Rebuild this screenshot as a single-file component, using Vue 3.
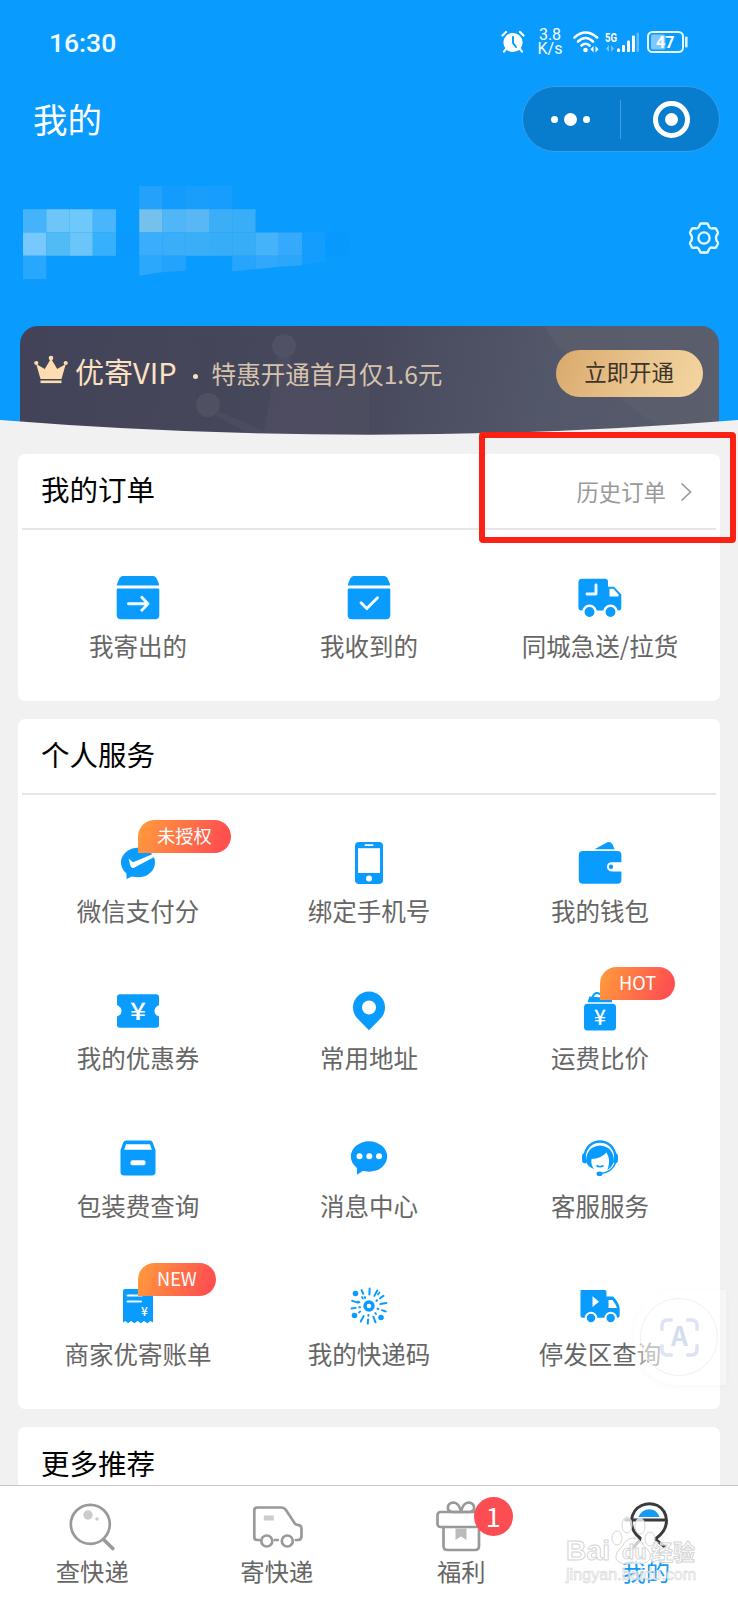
<script setup>
const mosaic = [
  [5, 0, '#24a2fb'], [6, 0, '#149cfd'], [7, 0, '#1a9efc'], [8, 0, '#169dfd'],
  [0, 1, '#45b3fb'], [1, 1, '#6dc5f8'], [2, 1, '#6fc8fa'], [3, 1, '#48b5fc'],
  [5, 1, '#74c1ec'], [6, 1, '#50b6f6'], [7, 1, '#59b7f6'], [8, 1, '#3caef7'], [9, 1, '#39adf7'],
  [0, 2, '#76c8ff'], [1, 2, '#50bbf5'], [2, 2, '#6bc5f9'], [3, 2, '#37b0fc'], [4, 2, '#0a99fd'],
  [5, 2, '#3aaefb'], [6, 2, '#3aaef9'], [7, 2, '#3aaef7'], [8, 2, '#38adf7'], [9, 2, '#38adf7'], [10, 2, '#46b2f9'], [11, 2, '#35a9fc'], [12, 2, '#139dfd'], [13, 2, '#0899ff'],
  [0, 3, '#28a7ff'],
]
const orders = [
  { icon: 'sent', label: '我寄出的' },
  { icon: 'received', label: '我收到的' },
  { icon: 'express', label: '同城急送/拉货' },
]
const services = [
  { icon: 'pay', label: '微信支付分', tag: '未授权' },
  { icon: 'phone', label: '绑定手机号' },
  { icon: 'wallet', label: '我的钱包' },
  { icon: 'coupon', label: '我的优惠券' },
  { icon: 'pin', label: '常用地址' },
  { icon: 'compare', label: '运费比价', tag: 'HOT' },
  { icon: 'pack', label: '包装费查询' },
  { icon: 'message', label: '消息中心' },
  { icon: 'support', label: '客服服务' },
  { icon: 'bill', label: '商家优寄账单', tag: 'NEW' },
  { icon: 'code', label: '我的快递码' },
  { icon: 'truck', label: '停发区查询' },
]
const groups = [
  { key: 'orders', title: '我的订单', more: '历史订单', items: orders },
  { key: 'services', title: '个人服务', items: services },
]
const rays = [272, 245, 298, 325, 350, 18, 68, 94, 118, 172, 197]
const tabs = [
  { icon: 'search', label: '查快递' },
  { icon: 'van', label: '寄快递' },
  { icon: 'gift', label: '福利', badge: 1 },
  { icon: 'me', label: '我的', active: true },
]
</script>

<template>
  <div class="app">
    <header class="hero">
      <div class="status">
        <span class="clock">16:30</span>
        <div class="status-icons">
          <svg class="alarm" viewBox="0 0 24 24">
            <circle cx="12" cy="12.5" r="9.6" fill="#fff" />
            <path d="M1.5 5.5L5 2M22.5 5.5L19 2M5 19l-2 2.6M19 19l2 2.6" stroke="#fff" stroke-width="2.2" stroke-linecap="round" />
            <path d="M12 7v6l3 4" fill="none" stroke="#0a9bff" stroke-width="2" stroke-linecap="round" />
          </svg>
          <span class="speed"><span>3.8</span><span>K/s</span></span>
          <svg class="wifi" viewBox="0 0 26 24">
            <g fill="none" stroke="#fff" stroke-width="2.6" stroke-linecap="round">
              <path d="M1.5 7.5Q12.500-2.500 24 7.500" /><path d="M5 11.500Q12.500 4.500 20 11.500" /><path d="M8.500 15.500Q12.500 12 16.500 15.500" />
            </g>
            <circle cx="12.500" cy="20" r="2.300" fill="#fff" />
            <path d="M20.500 16v6.400L17.500 19.200zM22.500 16v6.400l3-3.200z" fill="#fff" />
          </svg>
          <svg class="signal" viewBox="0 0 36 24">
            <text x="0" y="11.500" class="five-g" textLength="12" lengthAdjust="spacingAndGlyphs">5G</text>
            <path d="M4 15v7l-3-3.500zM6 15v7l3-3.500z" fill="#6fc4ff" />
            <g fill="#fff"><rect x="12" y="18.500" width="3" height="3.500" rx="1" /><rect x="17" y="15" width="3" height="7" rx="1" /><rect x="22" y="10.500" width="3" height="11.500" rx="1" /><rect x="27" y="5.500" width="3" height="16.500" rx="1" /></g>
            <rect x="31.500" y="2.500" width="2.500" height="19.500" rx="1" fill="#5cbcff" />
          </svg>
          <svg class="battery" viewBox="0 0 42 24">
            <rect x="1" y="2" width="35" height="20" rx="4.500" fill="none" stroke="#e9fbff" stroke-width="2" />
            <rect x="4" y="4.500" width="14.500" height="15" rx="2" fill="#7fc8ff" />
            <rect x="38" y="6.500" width="2.600" height="11" rx="1" fill="#d9f4ff" />
            <text x="18.300" y="17.800" text-anchor="middle" class="charge">47</text>
          </svg>
        </div>
      </div>

      <div class="title-row">
        <h1>我的</h1>
        <div class="capsule">
          <span class="dots"><i></i><i class="big"></i><i></i></span>
          <span class="bar"></span>
          <span class="target"><i></i></span>
        </div>
      </div>

      <div class="profile">
        <svg class="mosaic" viewBox="0 0 330 95">
          <rect v-for="(c, i) in mosaic" :key="i" :x="c[0] * 23.25" :y="c[1] * 23.25" width="23.300" height="23.300" :fill="c[2]" />
          <path d="M116.250 69.750h23.250v16.500l-23.250 3.500z" fill="#2ba7fb" />
          <path d="M139.500 69.750h23.250v15l-23.250 1.500z" fill="#24a3fc" />
          <path d="M209.250 69.750h23.250v13.500l-23.250 2z" fill="#27a4fb" />
          <path d="M232.500 69.750h23.250v11l-23.250 2.500z" fill="#30a8fb" />
          <path d="M255.750 69.750H279v9.500l-23.250 1.500z" fill="#2ba6fb" />
          <path d="M279 69.750h23.250v6l-23.250 3z" fill="#139dfd" />
        </svg>
        <svg class="gear" viewBox="-17 -17 34 34">
          <path d="M-3.500-14.500H3.500L5.500-10.500Q7.200-9 9.500-9.800L12-9.500 14-5.500Q14-4 12.500-2.500 11.500 0 12.500 2.500 14 4 14 5.500L12 9.500 9.500 9.800Q7.200 9 5.500 10.500L3.500 14.500H-3.500L-5.500 10.500Q-7.200 9-9.500 9.800L-12 9.500-14 5.500Q-14 4-12.500 2.500-11.500 0-12.500-2.500-14-4-14-5.500L-12-9.500-9.500-9.800Q-7.200-9-5.500-10.500Z" fill="none" stroke="#e6fbff" stroke-width="2.300" stroke-linejoin="round" />
          <circle r="5.600" fill="none" stroke="#e6fbff" stroke-width="2.300" />
        </svg>
      </div>

      <div class="vip">
        <svg class="vip-art" viewBox="0 0 699 115">
          <g fill="#555467" opacity=".75"><circle cx="264" cy="20" r="12" /><circle cx="188" cy="79" r="12" /><path d="M258 28h11l5 30q30 14 55-2l20-12v71H240l-20-12-24-13 2-5 46 20 6-33z" opacity=".55" /></g>
          <path d="M525 0q10 24 34 34l58 52q28 18 60 29h22V0z" fill="#62646f" opacity=".4" />
        </svg>
        <svg class="crown" viewBox="0 0 34 30">
          <path d="M6.500 24L2.200 9 10.800 14 17 3.500 23.200 14 31.800 9 27.500 24z" fill="#fcdcb0" />
          <g fill="#fcdcb0"><circle cx="17" cy="3" r="2.300" /><circle cx="2.300" cy="8" r="2.100" /><circle cx="31.700" cy="8" r="2.100" /><rect x="6.500" y="25.500" width="21" height="2.600" /></g>
        </svg>
        <span class="vip-name">优寄VIP</span>
        <span class="vip-dot"></span>
        <span class="vip-text">特惠开通首月仅1.6元</span>
        <button class="vip-btn">立即开通</button>
      </div>
      <svg class="curve" viewBox="0 0 738 17"><path d="M0 1Q369 30.500 738 1V17H0z" fill="#f1f1f1" /></svg>
    </header>

    <main class="content">
      <section v-for="g in groups" :key="g.key" class="card" :class="g.key">
        <div class="card-head">
          <h2>{{ g.title }}</h2>
          <div v-if="g.more" class="more">
            <span>{{ g.more }}</span>
            <svg viewBox="0 0 12 20"><path d="M1.500 1.500L10.500 10l-9 8.500" fill="none" stroke="#999" stroke-width="1.700" /></svg>
            <div class="highlight"></div>
          </div>
        </div>
        <div class="grid">
          <div v-for="it in g.items" :key="it.icon" class="item">
            <div class="icon-wrap">
              <svg class="icon" viewBox="-24 -24 48 48">
                <g v-if="it.icon === 'sent' || it.icon === 'received'">
                  <path d="M-21.300-12.500Q-19.500-19-17.500-21 -16.500-22-15-22H15Q16.500-22 17.500-21 19.500-19 21.300-12.500z" />
                  <path d="M-20.300-9.500H20.300Q21.300-9.500 21.300-8.500V17Q21.300 21.200 17 21.200H-17Q-21.300 21.200-21.300 17V-8.500Q-21.300-9.500-20.300-9.500z" />
                  <path v-if="it.icon === 'sent'" d="M-9.500 5.700H9.500M3.800-.8L10 5.700 3.800 12.200" class="line" />
                  <path v-else d="M-8 4.700L-2.200 10.600 8.500-.2" class="line" />
                </g>
                <g v-else-if="it.icon === 'express'">
                  <path d="M-18-19.300H5Q8-19.300 8-16V-11.200H14L21.300-3.500V9.500Q21.300 12.500 18.500 12.500H-18.500Q-21.600 12.500-21.600 9V-15.500Q-21.600-19.300-18-19.300z" />
                  <path d="M9.500-9.300H13.500L18.500-3.500V-1.500H9.500z" fill="#fff" />
                  <path d="M-4-13V-4H-13" class="line" stroke-linecap="butt" />
                  <g stroke="#fff" stroke-width="2.500"><circle cx="-10.500" cy="14" r="6.200" /><circle cx="10.500" cy="14" r="6.200" /></g>
                </g>
                <g v-else-if="it.icon === 'pay'">
                  <ellipse cy="-.5" rx="17" ry="14.800" /><path d="M-11.500 9V16L-3 12z" />
                  <path d="M-9.500-4.500L-5-.8 16.200-9.500V-6L-4.500 5Q-6.500 5.500-7.500 3z" fill="#fff" />
                </g>
                <g v-else-if="it.icon === 'phone'">
                  <rect x="-14" y="-21" width="28" height="42" rx="4" /><rect x="-11" y="-14.800" width="22" height="24.800" fill="#fff" />
                  <rect x="-4.500" y="-18.800" width="9" height="1.900" rx="1" fill="#fff" /><circle cy="15.500" r="3" fill="#fff" />
                </g>
                <g v-else-if="it.icon === 'wallet'">
                  <path d="M-5.500-13.800L7.500-20.800Q11-21.500 12.500-18.500L14.600-13.800z" /><rect x="-21.200" y="-12" width="42.600" height="32.800" rx="4" />
                  <path d="M22-.8H11.500a4.600 4.600 0 000 9.200H22z" fill="#fff" /><circle cx="11" cy="3.700" r="2.200" />
                </g>
                <g v-else-if="it.icon === 'coupon'">
                  <path d="M-18-16.800H18Q21-16.800 21-14V-6Q16.500-4 16.500 0 16.500 4 21 5.500V14Q21 16.800 18 16.800H-18Q-21 16.800-21 14V5.500Q-16.500 4-16.500 0-16.500-4-21-6V-14Q-21-16.800-18-16.800z" />
                  <text y="9" class="yen" textLength="16" lengthAdjust="spacingAndGlyphs">¥</text>
                </g>
                <g v-else-if="it.icon === 'pin'">
                  <path d="M0 19.300L-11.800 7.300A16 16 0 1111.800 7.300z" /><circle cy="-3.500" r="7" fill="#fff" />
                </g>
                <g v-else-if="it.icon === 'compare'">
                  <path d="M-12.500-8.800L-10.500-14.500 2-13.500 12-14.500V-8.800z" /><path d="M-7.500-14Q-5-20 0-17 3-19 6-14" fill="none" stroke="#0a9bff" stroke-width="2" />
                  <rect x="-16" y="-7.200" width="32" height="26.600" rx="3.500" /><text y="14.300" class="yen small">¥</text>
                </g>
                <g v-else-if="it.icon === 'pack'">
                  <path d="M-12-17.600H12Q14-17.600 14.700-15.500L17.500-8V14Q17.500 17.400 14 17.400H-14Q-17.500 17.400-17.500 14V-8L-14.700-15.500Q-14-17.600-12-17.600z" />
                  <path d="M-12-13.800H12L13.800-8.200H-13.800z" fill="#fff" /><rect x="-7.500" y="2.300" width="15" height="5" rx="2" fill="#fff" />
                </g>
                <g v-else-if="it.icon === 'message'">
                  <ellipse cy="-1.500" rx="18.200" ry="15.200" /><path d="M-12 8V16.800L-4 11.500z" />
                  <g fill="#fff"><circle cx="-9.500" cy="-1.700" r="3" /><circle cx=".3" cy="-1.700" r="3" /><circle cx="10" cy="-1.700" r="3" /></g>
                </g>
                <g v-else-if="it.icon === 'support'">
                  <path d="M-15-4A15.200 15 0 0115-4" fill="none" stroke="#0a9bff" stroke-width="2.400" />
                  <path d="M-18-2Q-18-5-14-5.500V5.500Q-18 5.500-18 2zM18-2Q18-5 14-5.500V5.500Q18 5.500 18 2z" />
                  <path d="M-14 4Q-14-11.500 0-12.500 14-11.500 14 4 12 9 7.500 12 10 4 8.500-1L6.500-5.500Q1 .5-8.500 1-9.500 6-6 11-12 9-14 4z" />
                  <path d="M-3.500 7.500Q0 10 3.500 7.500M15.500 5Q12 14 1 15.500" fill="none" stroke="#0a9bff" stroke-width="1.600" />
                  <ellipse cx="-.5" cy="15.800" rx="3" ry="2.300" />
                </g>
                <g v-else-if="it.icon === 'bill'">
                  <path d="M-13-17H13Q15-17 15-15V16.500L12.500 15 9.500 17.200 6 15 3 17.200-.5 15-3.500 17.200-7 15-10 17.200-12.500 15-15 16.500V-15Q-15-17-13-17z" />
                  <path d="M-10.500-10.500H4M-10.500-4.500H3" class="line thin" /><text x="6.500" y="9.800" class="yen tiny">¥</text>
                </g>
                <g v-else-if="it.icon === 'code'">
                  <circle r="4" fill="none" stroke="#0a9bff" stroke-width="3.400" />
                  <path v-for="(a, i) in rays" :key="a" :transform="`rotate(${a})`" :d="i % 2 ? 'M9 0H9.800M13.500 0H17.600' : 'M11.500 0H17.600'" stroke="#0a9bff" stroke-width="2" stroke-linecap="round" />
                  <circle cx="-13.500" cy="-12.500" r="2.800" /><circle cx="-14.500" cy="9.500" r="2.800" /><circle cx="12" cy="11.500" r="2.800" />
                  <path d="M-11-4.500L-9.500-3.800M-10 6.500L-8.800 5.500M7 8L6.200 7M-7-9L-6-7.500M10.500-13.500L9-11.500" stroke="#0a9bff" stroke-width="1.800" stroke-linecap="round" />
                </g>
                <g v-else>
                  <path d="M-18.500-16H4.500Q6.500-16 6.500-14V-9.500H13Q19.500-3 19.700 3V9Q19.700 11.700 17.500 11.700H-17.500Q-19.500 11.700-19.500 9.700V-15Q-19.500-16-18.500-16z" />
                  <path d="M8.500-6H12.500Q15.500-2.500 17 2H8.500zM-7.500-9.700L-1-4.300-7.500 1z" fill="#fff" />
                  <g stroke="#fff" stroke-width="2"><circle cx="-9" cy="12" r="5.200" /><circle cx="10.700" cy="12" r="5.200" /></g>
                </g>
              </svg>
              <span v-if="it.tag" class="tag">{{ it.tag }}</span>
            </div>
            <span class="label">{{ it.label }}</span>
          </div>
        </div>
      </section>
      <section class="card last"><div class="card-head"><h2>更多推荐</h2></div></section>
    </main>

    <div class="float-pane">
      <div class="float-btn">
        <svg viewBox="0 0 40 40">
          <path d="M2 13V8Q2 2 8 2H13M27 2H32Q38 2 38 8V13M38 27V32Q38 38 32 38H27M13 38H8Q2 38 2 32V27" fill="none" stroke="#dce4f3" stroke-width="3.500" />
          <text x="20" y="29" text-anchor="middle" class="scan">A</text>
        </svg>
      </div>
    </div>

    <nav class="tabbar">
      <div v-for="t in tabs" :key="t.icon" class="tab" :class="{ active: t.active }">
        <div class="tab-icon">
          <svg viewBox="-30 -30 60 60" fill="none" stroke="#999" stroke-width="2.700" stroke-linecap="round">
            <g v-if="t.icon === 'search'">
              <circle cx="-1.700" cy="-.7" r="19.500" /><path d="M12 15L20.800 23.500" stroke-width="3.600" />
              <g stroke="none" fill="#ccc"><circle cx="-4" cy="-10" r="4.700" /><circle cx="5" cy="-6" r="1.700" /></g>
            </g>
            <g v-else-if="t.icon === 'van'" transform="translate(-1.200 0)">
              <path d="M-16 15H-18.500Q-21.500 15-21.500 12V-14.500Q-21.500-17.500-18.500-17.500H5.500Q8.500-17.500 10.500-14.500L19-1.500Q20.500 0 22-.2 25.700 0 25.700 3.500V11Q25.700 15 22 15H20M-1 15H2" />
              <circle cx="-9" cy="16" r="5.500" /><circle cx="11.500" cy="16" r="5.500" /><path d="M-12-9.500h10v5h-10z" fill="#ccc" stroke="none" />
            </g>
            <g v-else-if="t.icon === 'gift'">
              <rect x="-23.500" y="-13" width="42" height="15" rx="3" /><path d="M-17.500 2V21Q-17.500 25 -13.500 25H14Q18 25 18 21V2" />
              <path d="M0-13H-9Q-14-14-13-18.500-12-22.500-7-22.500-2-22 0-13ZM0-13H9Q14-14 13-18.500 12-22.500 7-22.500 2-22 0-13Z" />
              <path d="M-5.500 3.500H5.500V15L0 11.500-5.500 15z" fill="#bbb" stroke="none" />
            </g>
            <g v-else stroke="#3b3b3b" stroke-width="3" transform="translate(-.5 0)">
              <path d="M-5.500 13Q-14.500 6-14-4.500 -13-15.500-4-19.500 4-23 12-19.500 20.500-15 21-4.500 21 6 10.500 13.500L10 14.500 19.500 22M-5.500 13L-6 15.500-13.500 24" />
              <path d="M-21-5H20" stroke-linecap="butt" /><path d="M-7-8Q-4-15.500 4-15.800 11.500-15.500 14-8z" fill="#159bf5" stroke="none" />
            </g>
          </svg>
          <span v-if="t.badge" class="badge">{{ t.badge }}</span>
        </div>
        <span class="tab-label">{{ t.label }}</span>
      </div>
    </nav>

    <svg class="watermark" viewBox="0 0 140 76">
      <g fill="#fff" fill-opacity=".75" stroke="#d6d6d6" stroke-width="1">
        <ellipse cx="54" cy="27" rx="5" ry="7" /><ellipse cx="64" cy="14" rx="5" ry="8" /><ellipse cx="77" cy="15" rx="5" ry="8" /><ellipse cx="87" cy="28" rx="5" ry="7" />
        <path d="M70 27Q77 27 81 35 89 41 87 48 82 55 70 52 58 55 53 48 52 41 59 36 63 27 70 27z" />
        <text x="3" y="49" class="wm-latin" textLength="44" lengthAdjust="spacingAndGlyphs">Bai</text><text x="59" y="48" class="wm-du">du</text><text x="88" y="49" class="wm-cjk">经验</text>
      </g>
      <text x="3" y="69" class="wm-url" textLength="130">jingyan.baidu.com</text>
    </svg>
  </div>
</template>

<style scoped>
.app { position: relative; width: 738px; height: 1600px; overflow: hidden; background: #f1f1f1; font-family: "Noto Sans CJK SC", sans-serif; display: flex; flex-direction: column; }
h1, h2 { margin: 0; font-weight: 400; }
.hero { position: relative; flex: none; height: 436px; box-sizing: border-box; background: #0a9bff; display: flex; flex-direction: column; overflow: hidden; color: #fff; }
.status { display: flex; justify-content: space-between; align-items: center; height: 84px; box-sizing: border-box; padding: 0 49px 0 49px; flex: none; }
.clock { font: 500 26.500px/30px Roboto, sans-serif; color: #f0fdff; padding-top: 2px; }
.status-icons { display: flex; align-items: center; }
.alarm { width: 24px; height: 24px; margin-right: 13px; }
.speed { display: flex; flex-direction: column; align-items: center; width: 24px; font: 400 16px/14.500px Roboto, sans-serif; color: #f2fdff; margin-right: 11px; }
.wifi { width: 26px; height: 24px; margin-right: 6px; }
.signal { width: 36px; height: 24px; margin-right: 6px; }
.battery { width: 42px; height: 24px; }
.five-g { font: 700 13.500px Roboto, sans-serif; fill: #fff; }
.charge { font: 700 16px Roboto, sans-serif; fill: #fff; }
.title-row { flex: none; height: 70px; display: flex; justify-content: space-between; align-items: center; padding: 0 18px 0 33px; }
h1 { font-size: 34.500px; line-height: 44px; padding-bottom: 3px; }
.capsule { width: 198.500px; height: 66px; box-sizing: border-box; border: 1.500px solid #389fe4; border-radius: 33px; background: #087dcd; display: flex; align-items: center; }
.dots, .target { display: flex; align-items: center; justify-content: center; }
.dots { flex: 1; gap: 6px; padding-right: 2px; }
.dots i { width: 7px; height: 7px; border-radius: 50%; background: #fff; }
.dots i.big { width: 13px; height: 13px; }
.bar { width: 1px; height: 39px; background: #3a9ee1; }
.target { width: 37px; height: 37px; box-sizing: border-box; border: 5px solid #fff; border-radius: 50%; margin: 0 29px 0 32px; }
.target i { width: 13px; height: 13px; border-radius: 50%; background: #fff; }
.profile { flex: none; height: 172px; box-sizing: border-box; padding: 32px 17px 0 23px; display: flex; justify-content: space-between; align-items: flex-start; }
.mosaic { width: 330px; height: 95px; }
.gear { width: 34px; height: 34px; margin-top: 34.500px; }
.vip { position: relative; flex: none; height: 115px; margin: 0 19.500px; border-radius: 18px 18px 0 0; overflow: hidden; background: linear-gradient(100deg, #424358 0%, #48495c 50%, #53576a 75%, #575c6b 100%); display: flex; align-items: flex-start; padding: 0 16px 0 14.500px; }
.vip-art { position: absolute; left: 0; top: 0; width: 699px; height: 115px; }
.crown, .vip-name, .vip-dot, .vip-text, .vip-btn { position: relative; flex: none; }
.crown { width: 34px; height: 30px; margin-top: 29px; }
.vip-name { font-size: 29px; line-height: 40px; margin: 25px 0 0 7px; color: #fce2c0; }
.vip-dot { width: 5px; height: 5px; border-radius: 50%; background: #f8e0c0; margin: 48px 0 0 16px; }
.vip-text { font-size: 24.600px; line-height: 36px; margin: 29px 0 0 14px; color: #d5c3ad; white-space: nowrap; }
.vip-btn { margin: 24px 0 0 auto; width: 147px; height: 47px; border: 0; border-radius: 24px; padding: 0 0 5px; background: linear-gradient(115deg, #d9a96c, #ecc994 65%, #f5d59f); color: #3e3329; font: 400 22.400px/42px "Noto Sans CJK SC", sans-serif; }
.curve { position: absolute; left: 0; bottom: 0; width: 738px; height: 17px; }
.content { display: flex; flex-direction: column; gap: 18px; padding: 17.500px 18px 0; flex: none; }
.card { background: #fff; border-radius: 7px; flex: none; }
.orders { height: 247px; }
.services { height: 690.500px; }
.last { height: 100px; }
.card-head { height: 74.500px; margin: 0 4px; border-bottom: 2px solid #e6e6e6; display: flex; justify-content: space-between; align-items: center; padding: 0 23px 0 19px; }
h2 { font-size: 28.500px; line-height: 40px; padding-bottom: 3px; color: #000; }
.last .card-head { border: 0; }
.more { position: relative; display: flex; align-items: center; font-size: 22.400px; line-height: 32px; color: #999; gap: 14px; padding-right: 1px; }
.more svg { width: 12px; height: 20px; margin-top: 3px; }
.highlight { position: absolute; right: -43px; top: -43px; width: 245px; height: 99px; border: 6px solid #fb2114; border-radius: 4px; z-index: 2; }
.grid { display: grid; grid-template-columns: repeat(3, 231px); grid-auto-rows: 147.700px; padding: 44px 4.500px 0; }
.item { display: flex; flex-direction: column; align-items: center; }
.icon-wrap { position: relative; width: 48px; height: 48px; }
.icon { display: block; width: 48px; height: 48px; fill: #0a9bff; }
.line { fill: none; stroke: #f2fdff; stroke-width: 2.900px; stroke-linecap: round; stroke-linejoin: round; }
.thin { stroke-width: 2px; }
.yen { fill: #fff; font: 500 24px "Noto Sans CJK SC", sans-serif; text-anchor: middle; }
.small { font-size: 21px; }
.tiny { font-size: 12px; }
.tag { position: absolute; left: 24px; top: -19.500px; height: 33px; padding: 0 19px; border-radius: 17px 17px 17px 0; background: linear-gradient(110deg, #ff9d3b, #ff5050 88%); color: #fff; font: 400 18.200px/30px "Noto Sans CJK SC", sans-serif; white-space: nowrap; }
.label { font-size: 24.500px; line-height: 36px; margin-top: 5.500px; color: #666; white-space: nowrap; }
.float-pane { position: absolute; left: 634px; top: 1290px; width: 92px; height: 95px; background: rgba(255, 255, 255, .4); box-shadow: 0 2px 8px rgba(0, 0, 0, .03); border-radius: 45px 0 0 45px; }
.float-btn { position: absolute; left: 6px; top: 8px; width: 78px; height: 78px; box-sizing: border-box; border: 1.500px solid #f1f1f3; border-radius: 50%; background: rgba(255, 255, 255, .35); display: flex; align-items: center; justify-content: center; }
.float-btn svg { width: 39px; height: 39px; }
.scan { font: 700 27px "Noto Sans CJK SC", sans-serif; fill: #d5def1; }
.tabbar { position: absolute; left: 0; bottom: 0; width: 738px; height: 115px; box-sizing: border-box; border-top: 1px solid #c8c8c8; background: #fff; display: flex; }
.tab { flex: 1; display: flex; flex-direction: column; align-items: center; padding-top: 9px; }
.tab-icon { position: relative; width: 60px; height: 60px; }
.tab-icon svg { display: block; width: 60px; height: 60px; }
.badge { position: absolute; left: 42.500px; top: 2px; width: 39px; height: 39px; border-radius: 50%; background: #fb4d52; color: #fff; font: 400 27px/37px "Noto Sans CJK SC", sans-serif; text-align: center; }
.tab-label { font-size: 24.300px; line-height: 34px; margin-top: -1.500px; color: #666; }
.active .tab-label { color: #159bf5; }
.watermark { position: absolute; left: 563px; top: 1511px; width: 140px; height: 76px; overflow: visible; }
.wm-latin { font: 700 27px "Liberation Sans", sans-serif; }
.wm-du { font: 700 20px "Liberation Sans", sans-serif; }
.wm-cjk { font: 700 22px "Noto Sans CJK SC", sans-serif; }
.wm-url { font: 400 16px "Liberation Sans", sans-serif; fill: #fff; fill-opacity: .7; stroke: #d4d4d4; stroke-width: .6px; }
</style>
